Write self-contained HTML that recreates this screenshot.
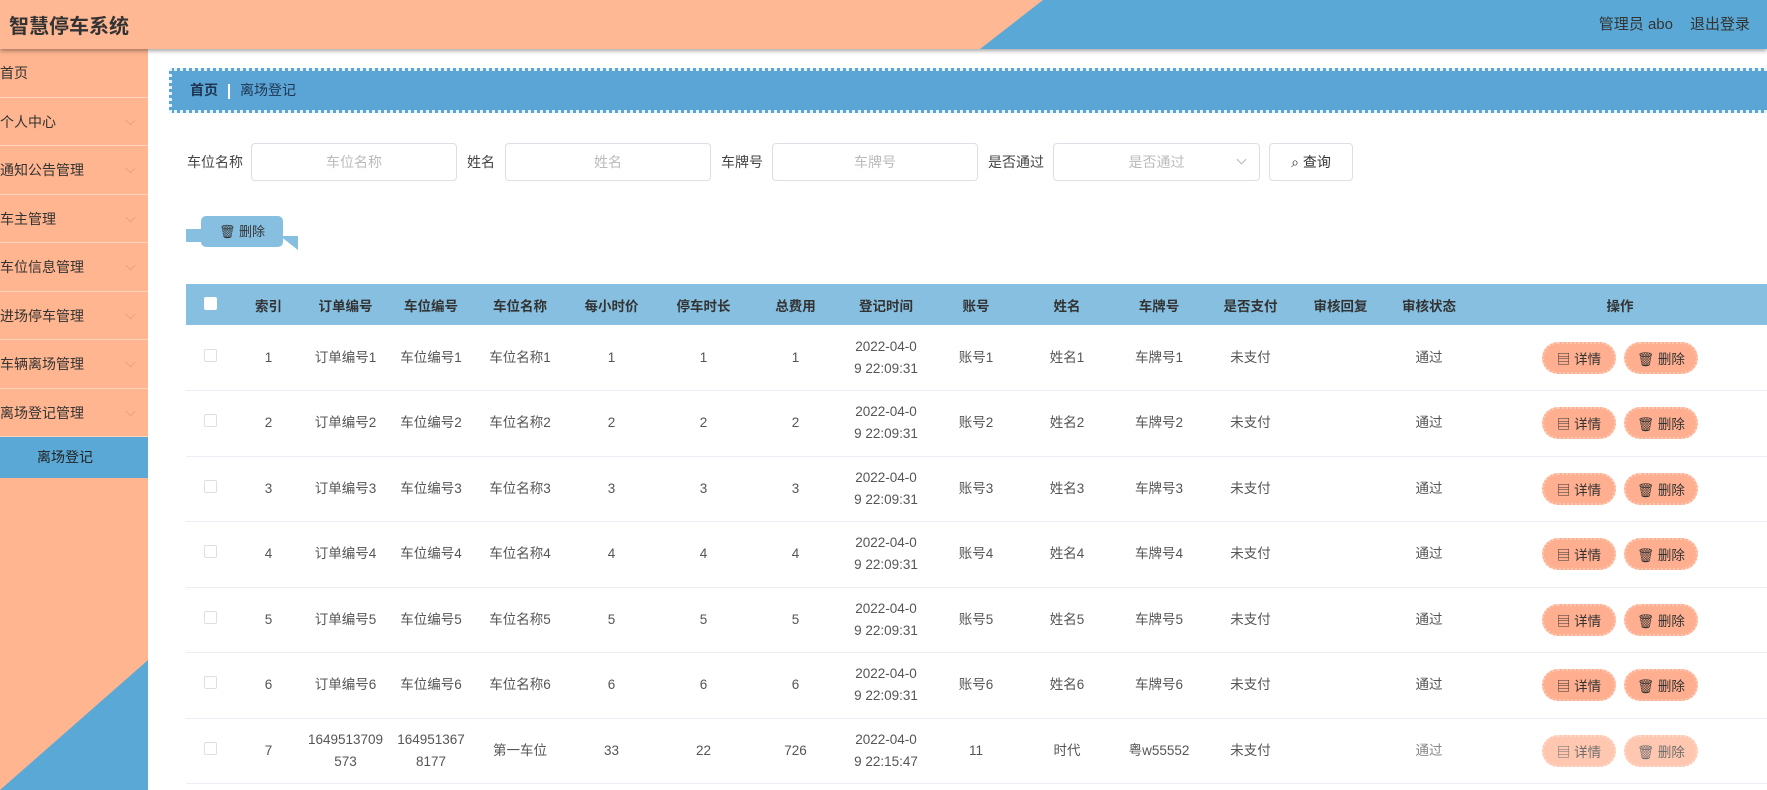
<!DOCTYPE html>
<html><head><meta charset="utf-8"><style>
*{margin:0;padding:0;box-sizing:border-box}
body{width:1767px;height:790px;overflow:hidden;background:#fff;font-family:"Liberation Sans","Noto Sans CJK SC",sans-serif;color:#555;font-size:14px;position:relative}
.hdr{position:absolute;left:0;top:0;width:1767px;height:49px;background:#ffb894;overflow:hidden;box-shadow:0 2px 4px rgba(0,0,0,.35);z-index:3}
.hdr .tri{position:absolute;left:0;top:0;width:1767px;height:49px;background:#5aa8d6;clip-path:polygon(1043px 0,1767px 0,1767px 49px,980px 49px)}
.hdr .t{position:absolute;left:9px;top:10px;font-size:20px;font-weight:bold;color:#333}
.hdr .r{position:absolute;right:0;top:13px;font-size:15px;color:#333}
.hdr .r span{margin-right:17px}
.side{position:absolute;left:0;top:49px;width:148px;height:741px;background:#ffb58f;overflow:hidden}
.side .bt{position:absolute;left:0;bottom:0;width:148px;height:130px;background:#5aa8d6;clip-path:polygon(148px 0,148px 130px,0 130px)}
.it{height:48.5px;line-height:48px;border-bottom:1px solid #fdd4bd;font-size:14px;color:#333;position:relative;padding-left:0}
.it .ch{position:absolute;right:14px;top:19px;width:7px;height:7px;border-right:1px solid #e9a17f;border-bottom:1px solid #e9a17f;transform:rotate(45deg)}
.act{height:41px;line-height:41px;background:#5aa8d6;color:#222;padding-left:37px;font-size:14px}
.bc{position:absolute;left:169px;top:68px;width:1598px;height:45px;background:#5aa5d5;border:3px dotted #e8f2f9;border-right:none;font-size:14px;color:#1f3550;line-height:39px;padding-left:18px}
.bc b{font-weight:bold;color:#1f3550}
.bc i{display:inline-block;width:2px;height:15px;background:#fff;vertical-align:middle;margin:0 10px}
.lbl{position:absolute;top:152px;font-size:14px;color:#444}
.inp{position:absolute;top:143px;height:38px;border:1px solid #dcdfe6;border-radius:4px;color:#bbb;text-align:center;line-height:36px;font-size:14px}
.btnq{position:absolute;left:1269px;top:143px;width:84px;height:38px;border:1px solid #dcdfe6;border-radius:4px;line-height:36px;text-align:center;font-size:14px;color:#333}
.del{position:absolute;left:201px;top:216px;width:82px;height:31px;background:#86bfe0;border-radius:5px;line-height:31px;text-align:center;color:#333;font-size:13px}
.f1{position:absolute;left:186px;top:229px;width:18px;height:13px;background:#86bfe0}
.f2{position:absolute;left:280px;top:236px;width:18px;height:14px;background:#86bfe0;clip-path:polygon(0 0,100% 0,100% 100%)}
table{position:absolute;left:186px;top:284px;width:1581px;border-collapse:collapse;table-layout:fixed}
th{background:#86bfe0;height:41px;font-size:13.5px;color:#333;font-weight:bold;text-align:center}
td{height:65.5px;border-bottom:1px solid #ebeef5;text-align:center;font-size:13.5px;color:#555;padding:0 9px;word-break:break-all;line-height:22px}
td:nth-child(3){padding:0 4px}
td:nth-child(4){padding:0 7px}
td:nth-child(9){padding:0 11px}
.cb{display:inline-block;width:13px;height:13px;border:1px solid #dcdfe6;border-radius:2px;background:#fff}
th .cb{border-color:#fff}
.b{display:inline-block;width:74px;height:32px;line-height:32px;background:#ffae8f;border-radius:16px;border:2px dotted #ffc9b1;color:#333;font-size:13.5px;margin:0 4px}
.fade{opacity:.7}
</style></head><body>
<div class="hdr"><div class="tri"></div><div class="t">智慧停车系统</div><div class="r"><span>管理员 abo</span><span>退出登录</span></div></div>
<div class="side">
<div class="it">首页</div>
<div class="it">个人中心<i class="ch"></i></div>
<div class="it">通知公告管理<i class="ch"></i></div>
<div class="it">车主管理<i class="ch"></i></div>
<div class="it">车位信息管理<i class="ch"></i></div>
<div class="it">进场停车管理<i class="ch"></i></div>
<div class="it">车辆离场管理<i class="ch"></i></div>
<div class="it">离场登记管理<i class="ch"></i></div>
<div class="act">离场登记</div>
<div class="bt"></div>
</div>
<div class="bc"><b>首页</b><i></i>离场登记</div>
<div class="lbl" style="left:187px">车位名称</div><div class="inp" style="left:251px;width:206px">车位名称</div>
<div class="lbl" style="left:467px">姓名</div><div class="inp" style="left:505px;width:206px">姓名</div>
<div class="lbl" style="left:721px">车牌号</div><div class="inp" style="left:772px;width:206px">车牌号</div>
<div class="lbl" style="left:988px">是否通过</div><div class="inp" style="left:1053px;width:207px">是否通过<span style="position:absolute;right:14px;top:12px;width:7px;height:7px;border-right:1px solid #bbb;border-bottom:1px solid #bbb;transform:rotate(45deg)"></span></div>
<div class="btnq">⌕ 查询</div>
<div class="f1"></div><div class="f2"></div><div class="del">🗑 删除</div>
<table>
<colgroup><col style="width:48px"><col style="width:69px"><col style="width:85px"><col style="width:86px"><col style="width:92px"><col style="width:91px"><col style="width:93px"><col style="width:91px"><col style="width:90px"><col style="width:90px"><col style="width:92px"><col style="width:92px"><col style="width:91px"><col style="width:89px"><col style="width:88px"><col style="width:294px"></colgroup>
<tr><th><span class="cb"></span></th><th>索引</th><th>订单编号</th><th>车位编号</th><th>车位名称</th><th>每小时价</th><th>停车时长</th><th>总费用</th><th>登记时间</th><th>账号</th><th>姓名</th><th>车牌号</th><th>是否支付</th><th>审核回复</th><th>审核状态</th><th>操作</th></tr>
<tr><td><span class="cb"></span></td><td>1</td><td>订单编号1</td><td>车位编号1</td><td>车位名称1</td><td>1</td><td>1</td><td>1</td><td>2022-04-09 22:09:31</td><td>账号1</td><td>姓名1</td><td>车牌号1</td><td>未支付</td><td></td><td>通过</td><td><span class="b">▤ 详情</span><span class="b">🗑 删除</span></td></tr>
<tr><td><span class="cb"></span></td><td>2</td><td>订单编号2</td><td>车位编号2</td><td>车位名称2</td><td>2</td><td>2</td><td>2</td><td>2022-04-09 22:09:31</td><td>账号2</td><td>姓名2</td><td>车牌号2</td><td>未支付</td><td></td><td>通过</td><td><span class="b">▤ 详情</span><span class="b">🗑 删除</span></td></tr>
<tr><td><span class="cb"></span></td><td>3</td><td>订单编号3</td><td>车位编号3</td><td>车位名称3</td><td>3</td><td>3</td><td>3</td><td>2022-04-09 22:09:31</td><td>账号3</td><td>姓名3</td><td>车牌号3</td><td>未支付</td><td></td><td>通过</td><td><span class="b">▤ 详情</span><span class="b">🗑 删除</span></td></tr>
<tr><td><span class="cb"></span></td><td>4</td><td>订单编号4</td><td>车位编号4</td><td>车位名称4</td><td>4</td><td>4</td><td>4</td><td>2022-04-09 22:09:31</td><td>账号4</td><td>姓名4</td><td>车牌号4</td><td>未支付</td><td></td><td>通过</td><td><span class="b">▤ 详情</span><span class="b">🗑 删除</span></td></tr>
<tr><td><span class="cb"></span></td><td>5</td><td>订单编号5</td><td>车位编号5</td><td>车位名称5</td><td>5</td><td>5</td><td>5</td><td>2022-04-09 22:09:31</td><td>账号5</td><td>姓名5</td><td>车牌号5</td><td>未支付</td><td></td><td>通过</td><td><span class="b">▤ 详情</span><span class="b">🗑 删除</span></td></tr>
<tr><td><span class="cb"></span></td><td>6</td><td>订单编号6</td><td>车位编号6</td><td>车位名称6</td><td>6</td><td>6</td><td>6</td><td>2022-04-09 22:09:31</td><td>账号6</td><td>姓名6</td><td>车牌号6</td><td>未支付</td><td></td><td>通过</td><td><span class="b">▤ 详情</span><span class="b">🗑 删除</span></td></tr>
<tr><td><span class="cb"></span></td><td>7</td><td>1649513709573</td><td>1649513678177</td><td>第一车位</td><td>33</td><td>22</td><td>726</td><td>2022-04-09 22:15:47</td><td>11</td><td>时代</td><td>粤w55552</td><td>未支付</td><td></td><td class="fade">通过</td><td class="fade"><span class="b">▤ 详情</span><span class="b">🗑 删除</span></td></tr>
</table>
</body></html>
